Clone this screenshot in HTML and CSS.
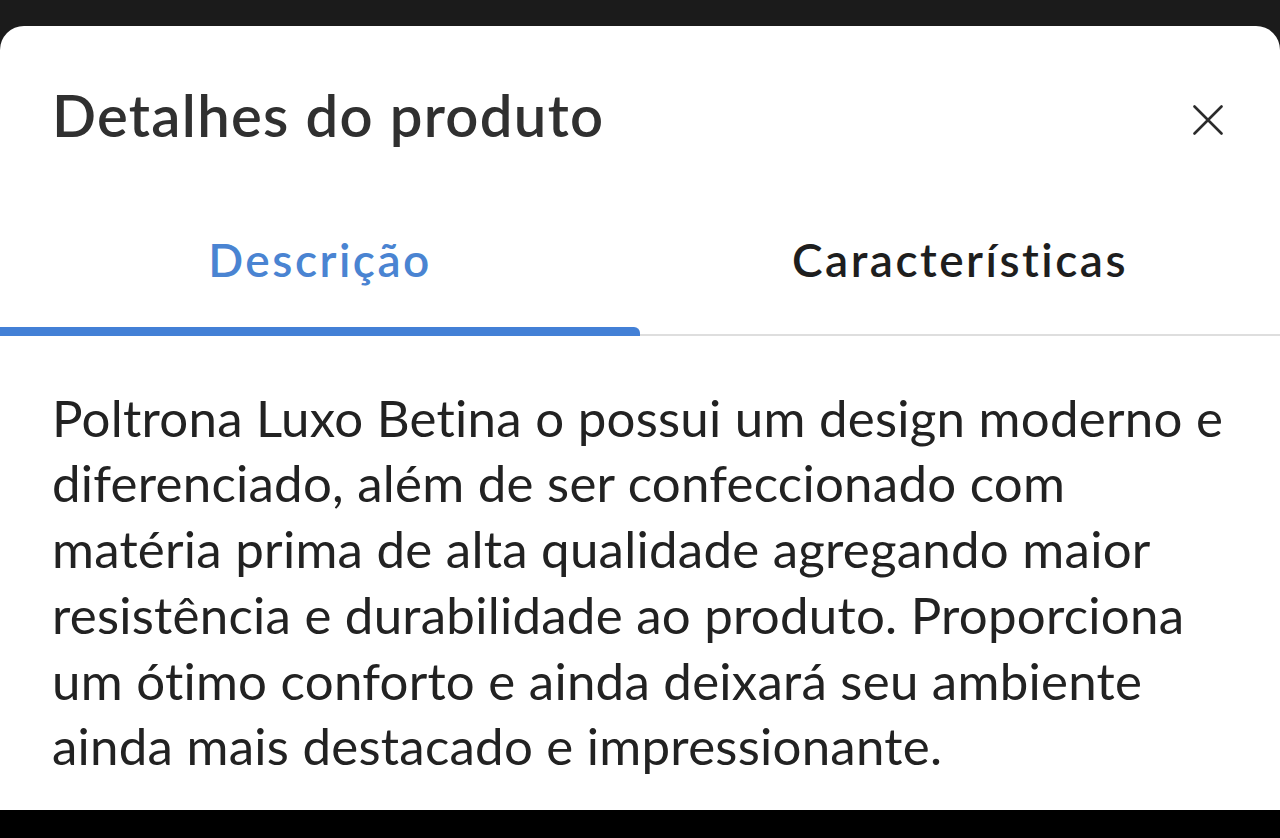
FILE: index.html
```html
<!DOCTYPE html>
<html lang="pt-BR">
<head>
<meta charset="utf-8">
<title>Detalhes do produto</title>
<link rel="stylesheet" href="styles.css">
</head>
<body>
<div class="screen">
  <section class="sheet">
    <header class="sheet-header">
      <h1 class="sheet-title">Detalhes do produto</h1>
      <button class="close-btn" aria-label="Fechar">
        <svg width="30" height="30" viewBox="0 0 30 30" aria-hidden="true">
          <path d="M1.5 1.5 L28.5 28.5 M28.5 1.5 L1.5 28.5" stroke="#2b2b2b" stroke-width="2.6" stroke-linecap="round" fill="none"/>
        </svg>
      </button>
    </header>
    <nav class="tabs">
      <div class="tab tab-active">
        <span class="tab-label">Descrição</span>
        <div class="tab-indicator"></div>
      </div>
      <div class="tab">
        <span class="tab-label">Características</span>
        <div class="tab-indicator"></div>
      </div>
    </nav>
    <p class="description">Poltrona Luxo Betina o possui um design moderno e diferenciado, além de ser confeccionado com matéria prima de alta qualidade agregando maior resistência e durabilidade ao produto. Proporciona um ótimo conforto e ainda deixará seu ambiente ainda mais destacado e impressionante.</p>
  </section>
  <div class="bottom-bar"></div>
</div>
</body>
</html>
```

FILE: styles.css
```css
* { box-sizing: border-box; }
html, body { margin: 0; padding: 0; }
body {
  background: #1b1b1b;
  font-family: Lato, "Open Sans", "Liberation Sans", sans-serif;
  width: 1280px;
  height: 838px;
  overflow: hidden;
}
.screen {
  display: flex;
  flex-direction: column;
  height: 838px;
  padding-top: 26px;
}
.sheet {
  background: #ffffff;
  border-radius: 24px 24px 0 0;
  height: 784px;
  display: flex;
  flex-direction: column;
}
.bottom-bar {
  background: #000;
  flex: 1;
}
.sheet-header {
  display: flex;
  justify-content: space-between;
  align-items: flex-start;
  padding: 54px 57px 0 52px;
}
.sheet-title {
  margin: 0;
  font-size: 58px;
  line-height: 1.2;
  font-weight: 600;
  letter-spacing: 1.3px;
  color: #303030;
}
.close-btn {
  margin-top: 25px;
  padding: 0;
  border: 0;
  background: none;
  width: 30px;
  height: 30px;
  display: block;
}
.close-btn svg { display: block; }
.tabs {
  display: flex;
}
.tab {
  flex: 1;
  display: flex;
  flex-direction: column;
  align-items: center;
  padding-top: 82px;
}
.tab-label {
  font-size: 46px;
  line-height: 1.2;
  font-weight: 600;
  letter-spacing: 2.5px;
  color: #1e1e1e;
  margin-bottom: 40px;
}
.tab-active .tab-label { color: #4a84d2; }
.tab-indicator {
  align-self: stretch;
  height: 9px;
  border-bottom: 2px solid #dedede;
}
.tab-active .tab-indicator {
  background: #4380d6;
  border-bottom: 0;
  border-top-right-radius: 6px;
}
.description {
  margin: 0;
  padding: 49px 42px 0 52px;
  font-size: 51px;
  line-height: 65.7px;
  letter-spacing: 0.25px;
  color: #222;
  font-weight: 400;
}
```
